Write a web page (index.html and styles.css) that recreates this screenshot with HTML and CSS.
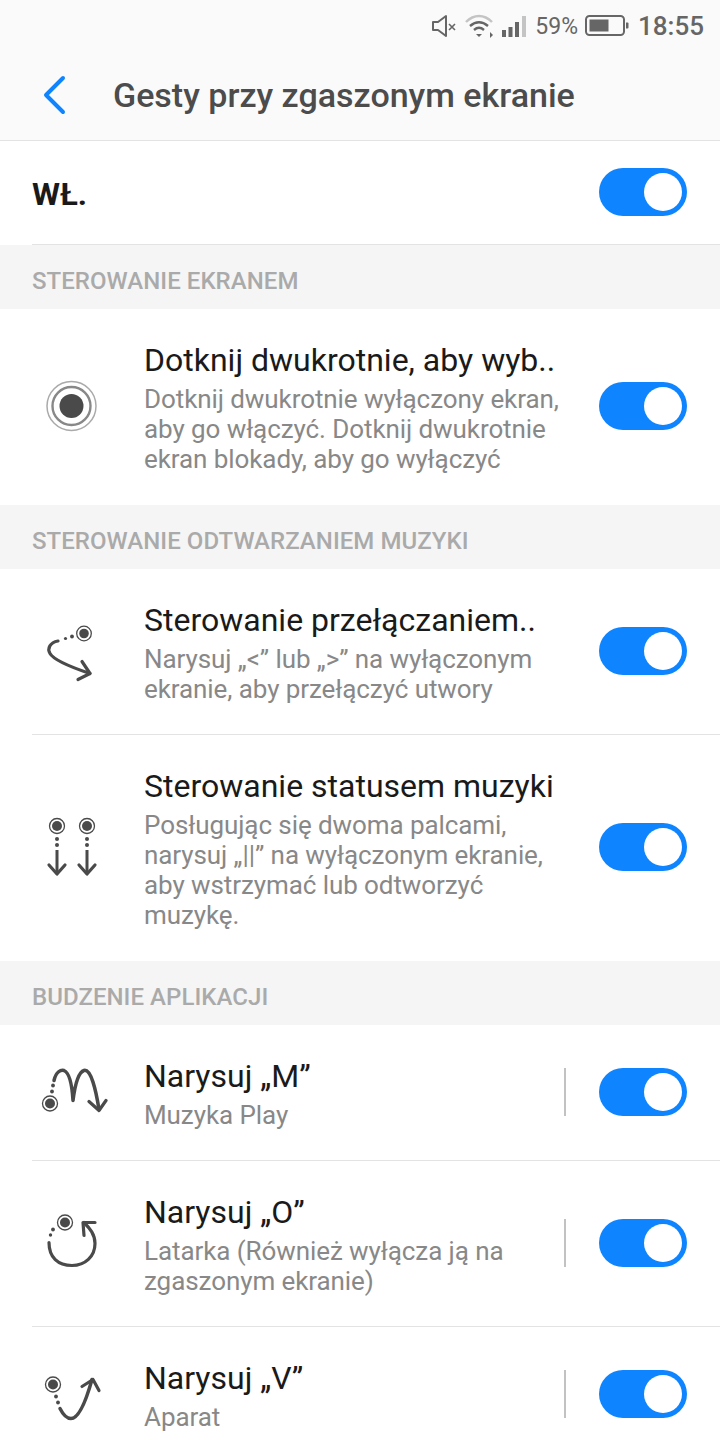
FILE: index.html
```html
<!DOCTYPE html>
<html lang="pl">
<head>
<meta charset="utf-8">
<title>Gesty przy zgaszonym ekranie</title>
<link rel="stylesheet" href="styles.css">
</head>
<body>
<div class="screen">
  <header class="top">
    <div class="status">
      <svg class="st-mute" viewBox="0 0 26 26" width="26" height="26"><path d="M2 9h5l8-6v20l-8-6H2z" fill="none" stroke="#666" stroke-width="2" stroke-linejoin="round"/><path d="M18 11l6 6M24 11l-6 6" stroke="#666" stroke-width="1.6" fill="none"/></svg>
      <svg class="st-wifi" viewBox="0 0 30 26" width="30" height="26"><path d="M1 9C9 1 19 1 27 9" fill="none" stroke="#c4c4c4" stroke-width="2.4"/><path d="M5 13c6-5 12-5 18 0" fill="none" stroke="#666" stroke-width="2.4"/><path d="M9 17c3.500-3 6.500-3 10 0" fill="none" stroke="#666" stroke-width="2.4"/><path d="M11 21h6l-3 3z" fill="#666"/><path d="M25 19v6l3-3z" fill="#666"/></svg>
      <svg class="st-signal" viewBox="0 0 24 24" width="24" height="24"><rect x="0" y="16" width="4" height="7" fill="#666"/><rect x="6.500" y="13" width="4" height="10" fill="#666"/><rect x="13" y="8" width="4" height="15" fill="#666"/><rect x="20" y="2" width="4" height="21" fill="#c4c4c4"/></svg>
      <span class="st-pct">59%</span>
      <svg class="st-batt" viewBox="0 0 44 22" width="44" height="22"><rect x="1" y="1" width="38" height="19" rx="3.500" fill="none" stroke="#666" stroke-width="2"/><rect x="4.500" y="4.500" width="19" height="12" fill="#666"/><path d="M41 7.500h1.500a1 1 0 0 1 1 1v4a1 1 0 0 1-1 1H41z" fill="#666"/></svg>
      <span class="st-time">18:55</span>
    </div>
    <div class="titlebar">
      <svg class="back" viewBox="0 0 24 40" width="24" height="40"><path d="M21 3L4 20l17 17" fill="none" stroke="#0f84ff" stroke-width="4" stroke-linecap="round" stroke-linejoin="round"/></svg>
      <h1 class="title">Gesty przy zgaszonym ekranie</h1>
    </div>
  </header>

  <div class="master">
    <span class="master-label">WŁ.</span>
    <span class="toggle"><span class="knob"></span></span>
  </div>

  <div class="section">STEROWANIE EKRANEM</div>
  <div class="row row-a">
    <svg class="ico" viewBox="2 -3 76 80" width="76" height="80"><circle cx="41.500" cy="36" r="24.500" fill="none" stroke="#aaa" stroke-width="1.500"/><circle cx="41.500" cy="36" r="19" fill="none" stroke="#888" stroke-width="2.400"/><circle cx="41.500" cy="36" r="12" fill="#4a4a4a"/></svg>
    <div class="text">
      <div class="name">Dotknij dwukrotnie, aby wyb..</div>
      <div class="desc">Dotknij dwukrotnie wyłączony ekran,<br>aby go włączyć. Dotknij dwukrotnie<br>ekran blokady, aby go wyłączyć</div>
    </div>
    <span class="toggle"><span class="knob"></span></span>
  </div>

  <div class="section">STEROWANIE ODTWARZANIEM MUZYKI</div>
  <div class="row row-b line">
    <svg class="ico" viewBox="2 1.500 76 80" width="76" height="80"><circle cx="54" cy="23" r="7.300" fill="none" stroke="#4a4a4a" stroke-width="1.300"/><circle cx="54" cy="23" r="4.800" fill="#4a4a4a"/><circle cx="42" cy="26" r="1.900" fill="#4a4a4a"/><circle cx="35.500" cy="28" r="1.600" fill="#4a4a4a"/><path d="M28 30.500C20 32 17 38 20 43c4 7 25 15 40 20" fill="none" stroke="#4a4a4a" stroke-width="3.200" stroke-linecap="round"/><path d="M52 51l8 12-12 6" fill="none" stroke="#4a4a4a" stroke-width="3.200" stroke-linecap="round" stroke-linejoin="round"/></svg>
    <div class="text">
      <div class="name">Sterowanie przełączaniem..</div>
      <div class="desc">Narysuj „&lt;” lub „&gt;” na wyłączonym<br>ekranie, aby przełączyć utwory</div>
    </div>
    <span class="toggle"><span class="knob"></span></span>
  </div>
  <div class="row row-c">
    <svg class="ico" viewBox="2 3 76 80" width="76" height="80"><g fill="#4a4a4a"><circle cx="27" cy="21" r="5"/><circle cx="57" cy="21" r="5"/><circle cx="27" cy="34" r="2"/><circle cx="27" cy="40" r="2"/><circle cx="57" cy="34" r="2"/><circle cx="57" cy="40" r="2"/></g><g fill="none" stroke="#4a4a4a"><circle cx="27" cy="21" r="7.500" stroke-width="1.300"/><circle cx="57" cy="21" r="7.500" stroke-width="1.300"/><path d="M27 45v24M57 45v24" stroke-width="3"/><path d="M19 60l8 9 8-9M49 60l8 9 8-9" stroke-width="3.200" stroke-linecap="round" stroke-linejoin="round"/></g></svg>
    <div class="text">
      <div class="name">Sterowanie statusem muzyki</div>
      <div class="desc">Posługując się dwoma palcami,<br>narysuj „||” na wyłączonym ekranie,<br>aby wstrzymać lub odtworzyć<br>muzykę.</div>
    </div>
    <span class="toggle"><span class="knob"></span></span>
  </div>

  <div class="section">BUDZENIE APLIKACJI</div>
  <div class="row row-d line">
    <svg class="ico" viewBox="2 -2.500 76 80" width="76" height="80"><circle cx="20" cy="48" r="7.500" fill="none" stroke="#4a4a4a" stroke-width="1.300"/><circle cx="20" cy="48" r="5" fill="#4a4a4a"/><circle cx="22" cy="36" r="1.900" fill="#4a4a4a"/><circle cx="23" cy="30" r="1.900" fill="#4a4a4a"/><path d="M24 25C26 16 31 14 34 15c5 2 8 14 9 30 2-16 5-28 11-30 7-2 12 20 15 39" fill="none" stroke="#4a4a4a" stroke-width="3.500" stroke-linecap="round" stroke-linejoin="round"/><path d="M59 46l10 9 7-10" fill="none" stroke="#4a4a4a" stroke-width="3.200" stroke-linecap="round" stroke-linejoin="round"/></svg>
    <div class="text">
      <div class="name">Narysuj „M”</div>
      <div class="desc">Muzyka Play</div>
    </div>
    <span class="divider"></span>
    <span class="toggle"><span class="knob"></span></span>
  </div>
  <div class="row row-e line">
    <svg class="ico" viewBox="2 -1.500 76 80" width="76" height="80"><circle cx="35" cy="17" r="7.500" fill="none" stroke="#4a4a4a" stroke-width="1.300"/><circle cx="35" cy="17" r="5" fill="#4a4a4a"/><circle cx="23" cy="24" r="1.900" fill="#4a4a4a"/><circle cx="20.500" cy="29.500" r="1.700" fill="#4a4a4a"/><path d="M19 37C19 52 28 60 42 60c13 0 23-9 23-22 0-9-5-15-11-21" fill="none" stroke="#4a4a4a" stroke-width="3.200" stroke-linecap="round"/><path d="M65 17H53l1 13" fill="none" stroke="#4a4a4a" stroke-width="3.200" stroke-linecap="round" stroke-linejoin="round"/></svg>
    <div class="text">
      <div class="name">Narysuj „O”</div>
      <div class="desc">Latarka (Również wyłącza ją na<br>zgaszonym ekranie)</div>
    </div>
    <span class="divider"></span>
    <span class="toggle"><span class="knob"></span></span>
  </div>
  <div class="row row-f">
    <svg class="ico" viewBox="2 -10.500 76 80" width="76" height="80"><circle cx="23" cy="19" r="7.500" fill="none" stroke="#4a4a4a" stroke-width="1.300"/><circle cx="23" cy="19" r="5" fill="#4a4a4a"/><circle cx="26" cy="31" r="1.900" fill="#4a4a4a"/><circle cx="28" cy="37" r="1.900" fill="#4a4a4a"/><path d="M30 43c3 6 7 10 11 10 7 0 14-14 21-39" fill="none" stroke="#4a4a4a" stroke-width="3.500" stroke-linecap="round"/><path d="M52 21l11-7 6 11" fill="none" stroke="#4a4a4a" stroke-width="3.200" stroke-linecap="round" stroke-linejoin="round"/></svg>
    <div class="text">
      <div class="name">Narysuj „V”</div>
      <div class="desc">Aparat</div>
    </div>
    <span class="divider"></span>
    <span class="toggle"><span class="knob"></span></span>
  </div>
</div>
</body>
</html>
```
FILE: styles.css
```css
* { box-sizing: border-box; }
html, body { margin: 0; padding: 0; }
body { background: #fff; font-family: Roboto, "Noto Sans", sans-serif; overflow: hidden; }
.screen { width: 720px; height: 1440px; overflow: hidden; background: #fff; }

.top { background: #fafafa; border-bottom: 1px solid #e3e3e3; height: 141px; }
.status { height: 50px; display: flex; align-items: center; padding-right: 16px; padding-top: 2px; justify-content: flex-end; color: #666; }
.st-mute { margin-right: 8px; }
.st-wifi { margin-right: 7px; }
.st-signal { margin-right: 9px; }
.st-pct { font-size: 23px; margin-right: 7px; }
.st-batt { margin-right: 9px; }
.st-time { font-size: 26px; font-weight: 500; }

.titlebar { height: 90px; display: flex; align-items: center; padding-left: 42px; }
.back { margin-right: 47px; }
.title { margin: 0; font-size: 34px; font-weight: 500; color: #4c4c4c; }

.master { height: 104px; margin-left: 32px; padding-right: 33px; display: flex; align-items: center; justify-content: space-between; border-bottom: 1px solid #e3e3e3; }
.master-label { font-size: 32px; font-weight: 700; color: #1a1a1a; padding-top: 2px; }

.section { height: 64px; background: #f5f5f5; padding-left: 32px; padding-top: 8px; display: flex; align-items: center; font-size: 24px; font-weight: 500; letter-spacing: 0.05px; color: #aaa; }

.row { margin-left: 32px; padding-right: 33px; display: flex; align-items: center; }
.row.line { border-bottom: 1px solid #e3e3e3; }
.row-a { height: 196px; }
.row-b { height: 166px; }
.row-c { height: 226px; }
.row-d { height: 136px; }
.row-e { height: 166px; }
.row-f { height: 136px; }

.ico { flex: none; margin-right: 36px; }
.text { flex: 1; min-width: 0; }
.name { font-size: 32px; line-height: 40px; margin-bottom: 4px; color: #1a1a1a; white-space: nowrap; }
.desc { font-size: 26px; line-height: 30px; letter-spacing: -0.08px; color: #888; white-space: nowrap; }

.divider { flex: none; width: 2px; height: 48px; background: #c2c2c2; margin-right: 33px; margin-bottom: 2px; }

.toggle { flex: none; width: 88px; height: 48px; border-radius: 24px; background: #0f84ff; display: flex; align-items: center; justify-content: flex-end; padding-right: 5px; margin-bottom: 2px; }
.knob { width: 38px; height: 38px; border-radius: 50%; background: #fff; }
```
